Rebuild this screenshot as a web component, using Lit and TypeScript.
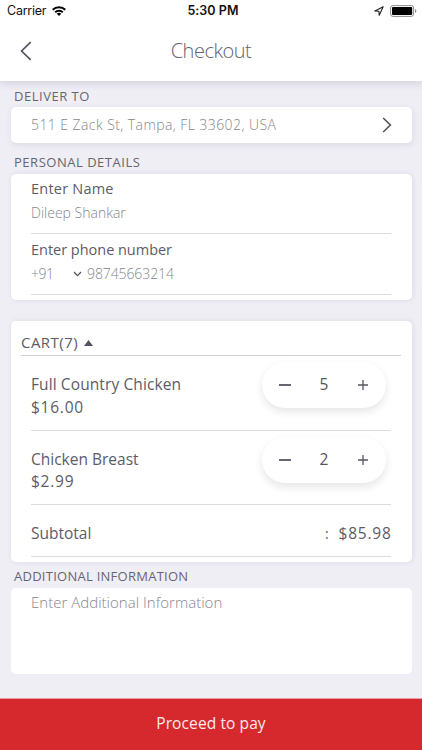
import { LitElement, html, css } from "lit";
import { customElement, property, state } from "lit/decorators.js";

@customElement("quantity-stepper")
class QuantityStepper extends LitElement {
  @property({ type: Number }) value = 0;

  static styles = css`
    :host {
      display: grid;
      grid-template-columns: 1fr 30px 1fr;
      align-items: center;
      justify-items: center;
      box-sizing: border-box;
      width: 124px;
      height: 46px;
      border-radius: 23px;
      background: #fff;
      box-shadow: 0 4px 8px rgba(0, 0, 0, 0.1);
      color: #575562;
      font-size: 15.5px;
      line-height: 22px;
    }
    svg {
      display: block;
      fill: none;
      stroke: currentColor;
    }
    span {
      padding-bottom: 2px;
    }
    .minus {
      stroke-width: 1.8;
      margin-right: 1px;
    }
    .plus {
      stroke-width: 1.3;
    }
  `;

  private change(by: number) {
    this.dispatchEvent(new CustomEvent("change-by", { detail: by }));
  }

  render() {
    return html`
      <svg class="minus" width="14" height="12" viewBox="0 0 14 12" @click=${() => this.change(-1)}>
        <path d="M1 6h12" />
      </svg>
      <span>${this.value}</span>
      <svg class="plus" width="12" height="12" viewBox="0 0 12 12" @click=${() => this.change(1)}>
        <path d="M1 6h10M6 1v10" />
      </svg>
    `;
  }
}

@customElement("status-bar")
class StatusBar extends LitElement {
  static styles = css`
    :host {
      display: grid;
      grid-template-columns: 1fr auto 1fr;
      align-items: center;
      height: 22px;
      padding: 0 5px 0 7px;
      font: 400 12.5px/22px Inter, sans-serif;
      color: #111;
    }
    .side {
      display: flex;
      align-items: center;
      gap: 6px;
    }
    .right {
      justify-content: flex-end;
      gap: 6px;
    }
    .carrier {
      letter-spacing: -0.25px;
    }
    .time {
      font-weight: 600;
      letter-spacing: 0.05px;
      padding-left: 2px;
    }
    svg {
      display: block;
    }
  `;

  render() {
    return html`
      <div class="side">
        <span class="carrier">Carrier</span>
        <svg width="14" height="10" viewBox="0 0 14 10" fill="none" stroke="#000" stroke-width="2">
          <path d="M.7 3.7a9 9 0 0 1 12.6 0" />
          <path d="M3.2 6.3a5.4 5.4 0 0 1 7.6 0" />
          <path d="M7 10 4.7 7.8a3.3 3.3 0 0 1 4.6 0z" fill="#000" stroke="none" />
        </svg>
      </div>
      <span class="time">5:30 PM</span>
      <div class="side right">
        <svg width="10" height="10" viewBox="0 0 10 10" fill="none" stroke="#222" stroke-width="1.1">
          <path d="M9.2 .8.9 4.9l4 .3.3 4z" stroke-linejoin="round" />
        </svg>
        <svg width="27" height="12" viewBox="0 0 27 12">
          <rect x=".6" y=".6" width="23" height="10.8" rx="2.4" fill="none" stroke="#8a8a8a" />
          <rect x="2" y="2" width="20.2" height="8" rx="1" fill="#000" />
          <path d="M25 4v4q1.3-.6 1.3-2T25 4z" fill="#8a8a8a" />
        </svg>
      </div>
    `;
  }
}

interface Item {
  name: string;
  price: string;
  quantity: number;
  nameClass: string;
}

@customElement("app-root")
class AppRoot extends LitElement {
  @state() private items: Item[] = [
    { name: "Full Country Chicken", price: "$16.00", quantity: 5, nameClass: "name wide" },
    { name: "Chicken Breast", price: "$2.99", quantity: 2, nameClass: "name" },
  ];

  static styles = css`
    :host {
      display: flex;
      flex-direction: column;
      height: 750px;
      overflow: hidden;
      background: #efeef5;
      color: #5d5b68;
      font-family: "Open Sans", "Noto Sans", sans-serif;
      white-space: nowrap;
    }
    svg {
      display: block;
      fill: none;
    }
    .top {
      flex: none;
      height: 81px;
      background: #fff;
      box-shadow: 0 2px 8px rgba(60, 55, 90, 0.18);
    }
    .nav {
      display: grid;
      grid-template-columns: 40px 1fr 40px;
      align-items: center;
      height: 58px;
      padding: 0 11px;
    }
    .nav svg {
      margin-left: 9px;
    }
    .title {
      padding-bottom: 2px;
      text-align: center;
      font-size: 20px;
      font-weight: 300;
      letter-spacing: -0.5px;
      color: #65636c;
    }
    .content {
      flex: 1;
      padding: 0 10.5px;
    }
    .label {
      padding-left: 3.5px;
      font-size: 13px;
      line-height: 18px;
      color: #686573;
      letter-spacing: 0.52px;
    }
    .deliver {
      margin-top: 6px;
      margin-bottom: 2px;
    }
    .personal {
      margin: 10px 0 3px;
    }
    .additional {
      margin: 5px 0 2.5px;
      letter-spacing: 0.26px;
    }
    .card {
      box-sizing: border-box;
      border-radius: 5px;
      background: #fff;
      box-shadow: 1px 2px 6px rgba(60, 55, 90, 0.11);
    }
    .muted {
      font-weight: 300;
      font-size: 14px;
      color: #86868a;
    }
    .address {
      display: flex;
      align-items: center;
      justify-content: space-between;
      height: 36px;
      padding: 0 19.5px 0 20.5px;
      letter-spacing: 0.42px;
    }
    .address span {
      padding-bottom: 2px;
    }
    .details,
    .cart {
      box-shadow: 1px 0 5px rgba(60, 55, 90, 0.1);
    }
    .details {
      height: 126px;
      padding: 4px 20.5px 0;
    }
    .field {
      box-sizing: border-box;
      height: 56px;
      border-bottom: 1px solid #dfdfe1;
    }
    .field + .field {
      height: 61px;
      padding-top: 5px;
    }
    .field-label {
      font-size: 14.5px;
      font-weight: 500;
      line-height: 22px;
      letter-spacing: -0.02px;
    }
    .field-label.short {
      letter-spacing: 0.22px;
    }
    .value {
      display: flex;
      align-items: center;
      line-height: 26px;
      letter-spacing: 0;
    }
    .code {
      width: 42px;
      letter-spacing: -0.5px;
    }
    .number {
      margin-left: 5px;
      letter-spacing: -0.1px;
    }
    .cart {
      height: 241px;
      margin-top: 21px;
      padding: 10px 10.5px 0;
    }
    .cart-head {
      display: flex;
      align-items: center;
      gap: 6px;
      height: 24px;
      border-bottom: 1px solid #d2d2d5;
      font-size: 15px;
      font-weight: 500;
      letter-spacing: 0.45px;
    }
    .cart-head span {
      padding-bottom: 2px;
    }
    .rows {
      padding: 0 10px;
    }
    .row {
      box-sizing: border-box;
      display: flex;
      justify-content: space-between;
      height: 74.5px;
      padding: 6px 5px 0 0;
      border-bottom: 1px solid #dcdcde;
      font-size: 15.5px;
      line-height: 22.5px;
    }
    .text {
      padding-top: 11px;
    }
    .name {
      letter-spacing: 0;
    }
    .name.wide {
      letter-spacing: 0.1px;
    }
    .price {
      letter-spacing: 0.75px;
    }
    .subtotal {
      box-sizing: border-box;
      display: flex;
      align-items: center;
      height: 52px;
      padding-top: 5px;
      border-bottom: 1px solid #dcdcde;
      font-size: 15.5px;
    }
    .colon {
      margin-left: auto;
      padding-right: 10px;
      font-size: 14px;
    }
    .total {
      letter-spacing: 0.75px;
      margin-right: -0.5px;
    }
    .notes {
      height: 86.5px;
      padding: 3px 20.5px;
      box-shadow: none;
      font-size: 15px;
      line-height: 22px;
      letter-spacing: 0.02px;
    }
    .pay {
      flex: none;
      box-sizing: border-box;
      height: 52px;
      border-top: 1px solid #e99aa3;
      background: #d6292d;
      color: #fbe9ea;
      text-align: center;
      font-size: 15.5px;
      line-height: 49px;
      letter-spacing: 0.1px;
    }
  `;

  private change(index: number, by: number) {
    this.items = this.items.map((item, i) =>
      i === index ? { ...item, quantity: Math.max(0, item.quantity + by) } : item,
    );
  }

  render() {
    const count = this.items.reduce((sum, item) => sum + item.quantity, 0);
    const total = this.items.reduce((sum, item) => sum + item.quantity * Number(item.price.slice(1)), 0);
    return html`
      <header class="top">
        <status-bar></status-bar>
        <div class="nav">
          <svg width="12" height="20" viewBox="0 0 12 20" stroke="#55535f" stroke-width="1.7">
            <path d="M10.7 1.2 1.6 10l9.1 8.8" />
          </svg>
          <span class="title">Checkout</span>
        </div>
      </header>
      <main class="content">
        <div class="label deliver">DELIVER TO</div>
        <section class="card address muted">
          <span>511 E Zack St, Tampa, FL 33602, USA</span>
          <svg width="10" height="16" viewBox="0 0 10 16" stroke="#55535f" stroke-width="1.6">
            <path d="M1.2 1 8.4 8l-7.2 7" />
          </svg>
        </section>
        <div class="label personal">PERSONAL DETAILS</div>
        <section class="card details">
          <div class="field">
            <div class="field-label short">Enter Name</div>
            <div class="value muted">Dileep Shankar</div>
          </div>
          <div class="field">
            <div class="field-label">Enter phone number</div>
            <div class="value muted">
              <span class="code">+91</span>
              <svg width="9" height="6" viewBox="0 0 9 6" stroke="#55535f" stroke-width="1.3">
                <path d="M1 1l3.5 3.6L8 1" />
              </svg>
              <span class="number">98745663214</span>
            </div>
          </div>
        </section>
        <section class="card cart">
          <div class="cart-head">
            <span>CART(${count})</span>
            <svg width="9" height="6" viewBox="0 0 9 6"><path d="M0 6 4.5 0 9 6z" fill="#55535f" /></svg>
          </div>
          <div class="rows">
            ${this.items.map(
              (item, i) => html`
                <div class="row">
                  <div class="text">
                    <div class=${item.nameClass}>${item.name}</div>
                    <div class="price">${item.price}</div>
                  </div>
                  <quantity-stepper
                    .value=${item.quantity}
                    @change-by=${(e: CustomEvent<number>) => this.change(i, e.detail)}
                  ></quantity-stepper>
                </div>
              `,
            )}
            <div class="subtotal">
              <span>Subtotal</span>
              <span class="colon">:</span>
              <span class="total">$${total.toFixed(2)}</span>
            </div>
          </div>
        </section>
        <div class="label additional">ADDITIONAL INFORMATION</div>
        <section class="card notes muted">Enter Additional Information</section>
      </main>
      <footer class="pay">Proceed to pay</footer>
    `;
  }
}
